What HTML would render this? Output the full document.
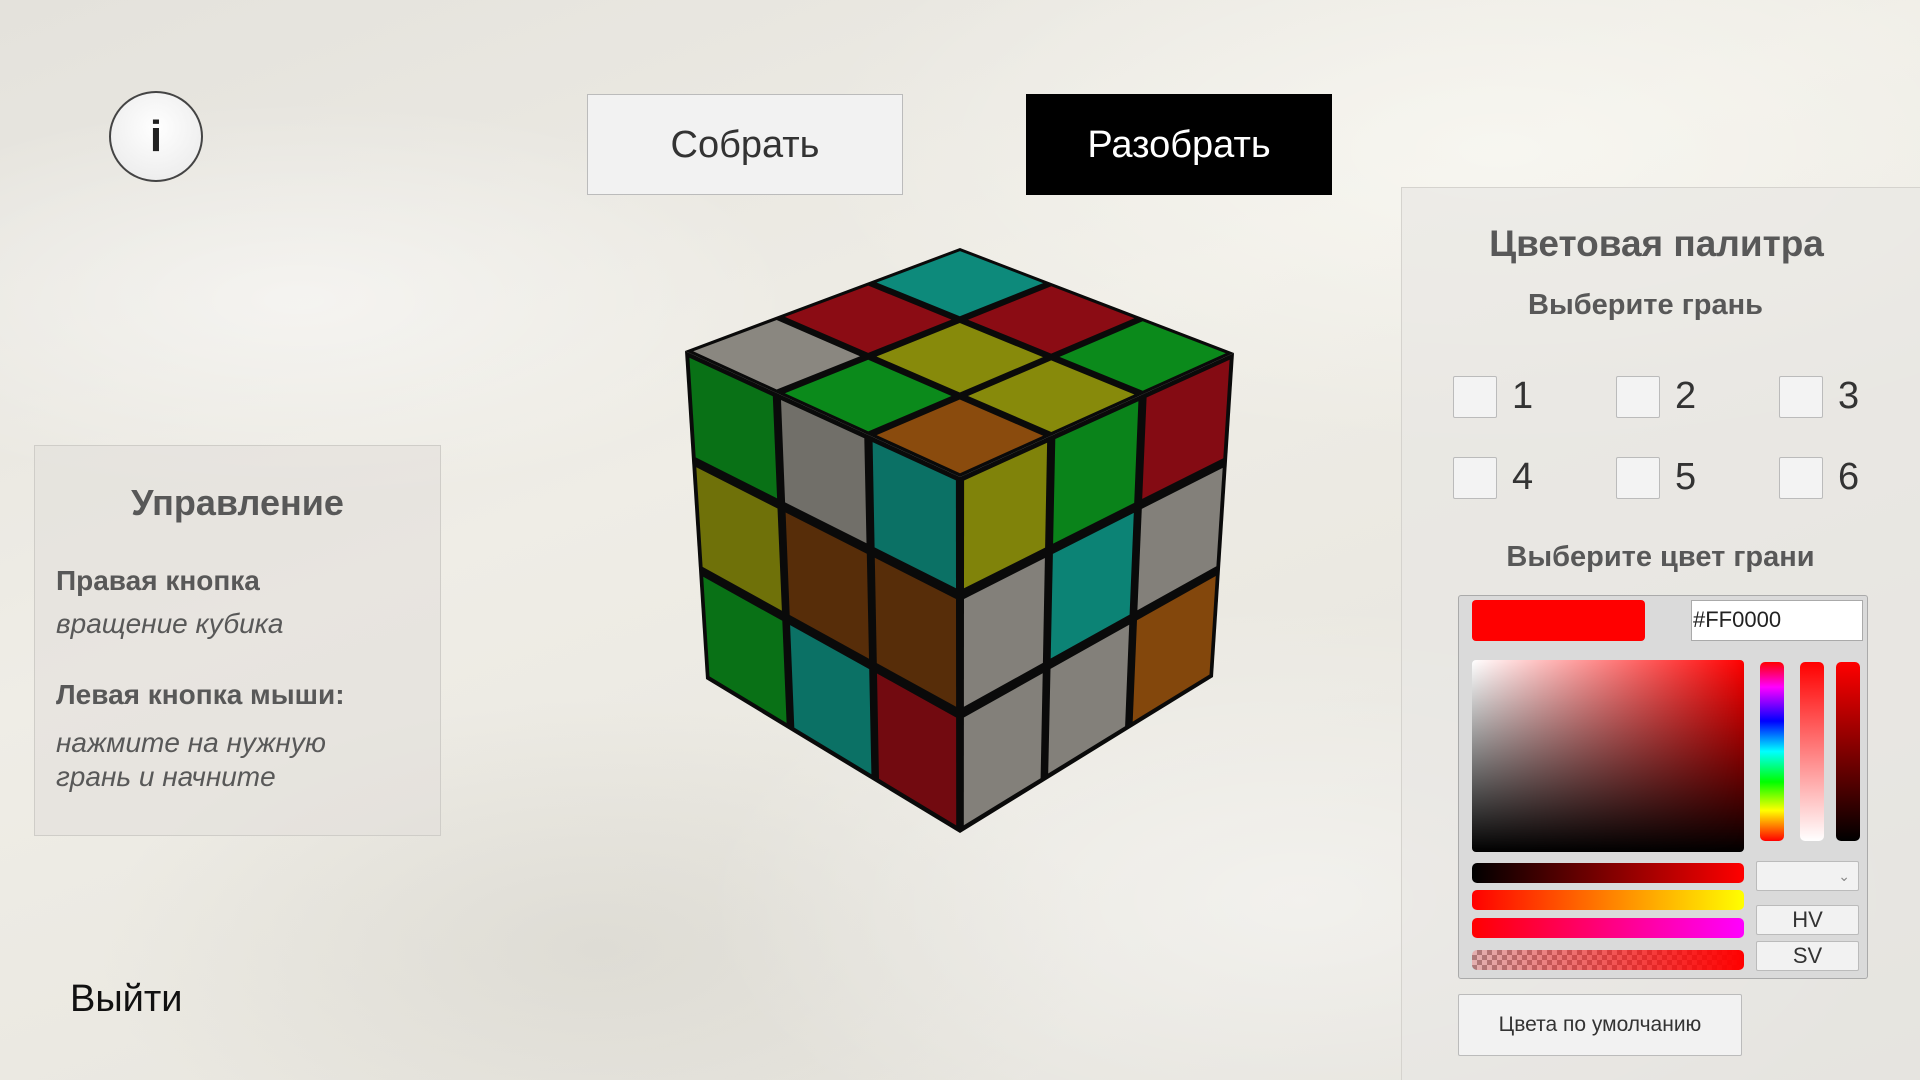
<!DOCTYPE html>
<html><head><meta charset="utf-8">
<style>
*{margin:0;padding:0;box-sizing:border-box}
body{width:1920px;height:1080px;overflow:hidden;position:relative;font-family:"Liberation Sans",sans-serif;
background:
radial-gradient(ellipse 500px 200px at 300px 300px,rgba(255,255,255,.5),transparent),
radial-gradient(ellipse 600px 300px at 1300px 900px,rgba(255,255,255,.45),transparent),
radial-gradient(ellipse 500px 250px at 600px 950px,rgba(200,198,190,.35),transparent),
radial-gradient(ellipse 700px 300px at 1500px 150px,rgba(255,255,250,.5),transparent),
linear-gradient(160deg,#e4e2dc 0%,#efede6 40%,#e9e7e0 70%,#e2e0da 100%);}
.abs{position:absolute}
.circle{left:109px;top:91px;width:94px;height:91px;border-radius:50%;border:2px solid #444;background:radial-gradient(circle at 50% 40%,#fff,#e8e8e8);text-align:center;font:bold 44px/88px "Liberation Sans",sans-serif;color:#222}
.btn1{left:587px;top:94px;width:316px;height:101px;background:#f2f2f2;border:1px solid #bbb;text-align:center;font:38px/101px "Liberation Sans",sans-serif;color:#333}
.btn2{left:1026px;top:94px;width:306px;height:101px;background:#000;text-align:center;font:38px/103px "Liberation Sans",sans-serif;color:#fff}
.lp{left:34px;top:445px;width:407px;height:391px;background:rgba(225,223,218,.55);border:1px solid #cfcdc8}
.t{position:absolute;white-space:nowrap;color:#585858}
.rp{left:1401px;top:187px;width:519px;height:893px;background:rgba(232,231,227,.65);border-left:1px solid #d5d3ce;border-top:1px solid #d5d3ce}
.cb{position:absolute;width:44px;height:42px;background:#f3f3f3;border:1px solid #bbb;border-radius:2px}
.num{position:absolute;font:38px "Liberation Sans",sans-serif;color:#333}
.pal{left:1458px;top:595px;width:410px;height:384px;background:#dadada;border:1px solid #aaa;border-radius:3px}
.bar{position:absolute;border-radius:5px}
.sbtn{position:absolute;background:#f2f2f2;border:1px solid #bbb;border-radius:2px;text-align:center;color:#333}
</style></head><body>
<div class="abs circle">i</div>
<div class="abs btn1">Собрать</div>
<div class="abs btn2">Разобрать</div>

<div class="abs lp"></div>
<div class="t" style="left:34px;width:407px;text-align:center;top:482px;font:bold 36px 'Liberation Sans',sans-serif">Управление</div>
<div class="t" style="left:56px;top:565px;font:bold 28px 'Liberation Sans',sans-serif">Правая кнопка</div>
<div class="t" style="left:56px;top:608px;font:italic 28px 'Liberation Sans',sans-serif">вращение кубика</div>
<div class="t" style="left:56px;top:679px;font:bold 28px 'Liberation Sans',sans-serif">Левая кнопка мыши:</div>
<div class="t" style="left:56px;top:727px;font:italic 28px 'Liberation Sans',sans-serif">нажмите на нужную</div>
<div class="t" style="left:56px;top:761px;font:italic 28px 'Liberation Sans',sans-serif">грань и начните</div>
<div class="t" style="left:70px;top:978px;font:38px 'Liberation Sans',sans-serif;color:#111">Выйти</div>

<svg class="abs" style="left:0;top:0" width="1920" height="1080" id="cube"></svg>

<div class="abs rp"></div>
<div class="t" style="left:1401px;width:519px;text-align:center;top:223px;font:bold 37px 'Liberation Sans',sans-serif;padding-right:8px">Цветовая палитра</div>
<div class="t" style="left:1401px;width:519px;text-align:center;top:289px;font:bold 29px 'Liberation Sans',sans-serif;padding-right:30px">Выберите грань</div>
<div class="cb" style="left:1453px;top:376px"></div><div class="num" style="left:1512px;top:375px">1</div>
<div class="cb" style="left:1616px;top:376px"></div><div class="num" style="left:1675px;top:375px">2</div>
<div class="cb" style="left:1779px;top:376px"></div><div class="num" style="left:1838px;top:375px">3</div>
<div class="cb" style="left:1453px;top:457px"></div><div class="num" style="left:1512px;top:456px">4</div>
<div class="cb" style="left:1616px;top:457px"></div><div class="num" style="left:1675px;top:456px">5</div>
<div class="cb" style="left:1779px;top:457px"></div><div class="num" style="left:1838px;top:456px">6</div>
<div class="t" style="left:1401px;width:519px;text-align:center;top:541px;font:bold 29px 'Liberation Sans',sans-serif">Выберите цвет грани</div>

<div class="abs pal"></div>
<div class="abs" style="left:1472px;top:600px;width:173px;height:41px;background:#f00;border-radius:4px"></div>
<div class="abs" style="left:1691px;top:600px;width:172px;height:41px;background:#fff;border:1px solid #aaa;font:22px/38px 'Liberation Sans',sans-serif;color:#222;padding-left:1px">#FF0000</div>
<div class="abs" style="left:1472px;top:660px;width:272px;height:192px;border-radius:4px;background:linear-gradient(to bottom,rgba(0,0,0,0),#000),linear-gradient(to right,#fff,#f00)"></div>
<div class="bar abs" style="left:1760px;top:662px;width:24px;height:179px;background:linear-gradient(to bottom,#f00,#f0f 14%,#00f 33%,#0ff 50%,#0f0 67%,#ff0 83%,#f00)"></div>
<div class="bar abs" style="left:1800px;top:662px;width:24px;height:179px;background:linear-gradient(#f00,#fff)"></div>
<div class="bar abs" style="left:1836px;top:662px;width:24px;height:179px;background:linear-gradient(#f00,#000)"></div>
<div class="bar abs" style="left:1472px;top:863px;width:272px;height:20px;background:linear-gradient(to right,#000,#f00)"></div>
<div class="bar abs" style="left:1472px;top:890px;width:272px;height:20px;background:linear-gradient(to right,#f00,#ff0)"></div>
<div class="bar abs" style="left:1472px;top:918px;width:272px;height:20px;background:linear-gradient(to right,#f00,#f0f)"></div>
<div class="bar abs" style="left:1472px;top:950px;width:272px;height:20px;background:linear-gradient(to right,rgba(255,0,0,.2),#f00),repeating-conic-gradient(#999 0 25%,#ddd 0 50%) 0 0/10px 10px"></div>
<div class="sbtn" style="left:1756px;top:861px;width:103px;height:30px;font:14px/28px sans-serif;text-align:right;padding-right:8px;color:#888">⌄</div>
<div class="sbtn" style="left:1756px;top:905px;width:103px;height:30px;font:22px/28px 'Liberation Sans',sans-serif">HV</div>
<div class="sbtn" style="left:1756px;top:941px;width:103px;height:30px;font:22px/28px 'Liberation Sans',sans-serif">SV</div>
<div class="sbtn" style="left:1458px;top:994px;width:284px;height:62px;font:21px/60px 'Liberation Sans',sans-serif">Цвета по умолчанию</div>

<script>
var T=[960,248],L=[685,351],C=[960,477],R=[1234,353],B=[960,833],LB=[706,679],RB=[1213,677];
var col={t:'#0d8a7b',r:'#8b0c14',g:'#0b8a1b',o:'#878a0b',w:'#8a8780',n:'#8a4b0d',b:'#6a370b'};
function shade(h,f){var n=parseInt(h.slice(1),16),r=n>>16,g=n>>8&255,b=n&255;return 'rgb('+Math.round(Math.min(255,r*f))+','+Math.round(Math.min(255,g*f))+','+Math.round(Math.min(255,b*f))+')';}
function bl(p00,p10,p01,p11,u,v){return [(1-u)*(1-v)*p00[0]+u*(1-v)*p10[0]+(1-u)*v*p01[0]+u*v*p11[0],(1-u)*(1-v)*p00[1]+u*(1-v)*p10[1]+(1-u)*v*p01[1]+u*v*p11[1]];}
var s='';
function face(p00,p10,p01,p11,grid,f){
 s+='<polygon points="'+[p00,p10,p11,p01].map(function(p){return p.join(',')}).join(' ')+'" fill="#0a0a0a"/>';
 var g=0.015;
 for(var j=0;j<3;j++)for(var i=0;i<3;i++){
  var u0=i/3+g,u1=(i+1)/3-g,v0=j/3+g,v1=(j+1)/3-g;
  var pts=[bl(p00,p10,p01,p11,u0,v0),bl(p00,p10,p01,p11,u1,v0),bl(p00,p10,p01,p11,u1,v1),bl(p00,p10,p01,p11,u0,v1)];
  s+='<polygon points="'+pts.map(function(p){return p[0].toFixed(1)+','+p[1].toFixed(1)}).join(' ')+'" fill="'+shade(col[grid[j][i]],f)+'"/>';
 }
}
face(T,R,L,C,[['t','r','g'],['r','o','o'],['w','g','n']],1.0);
face(L,C,LB,B,[['g','w','t'],['o','b','b'],['g','t','r']],0.82);
face(C,R,B,RB,[['o','g','r'],['w','t','w'],['w','w','n']],0.95);
document.getElementById('cube').innerHTML=s;
</script>
</body></html>
